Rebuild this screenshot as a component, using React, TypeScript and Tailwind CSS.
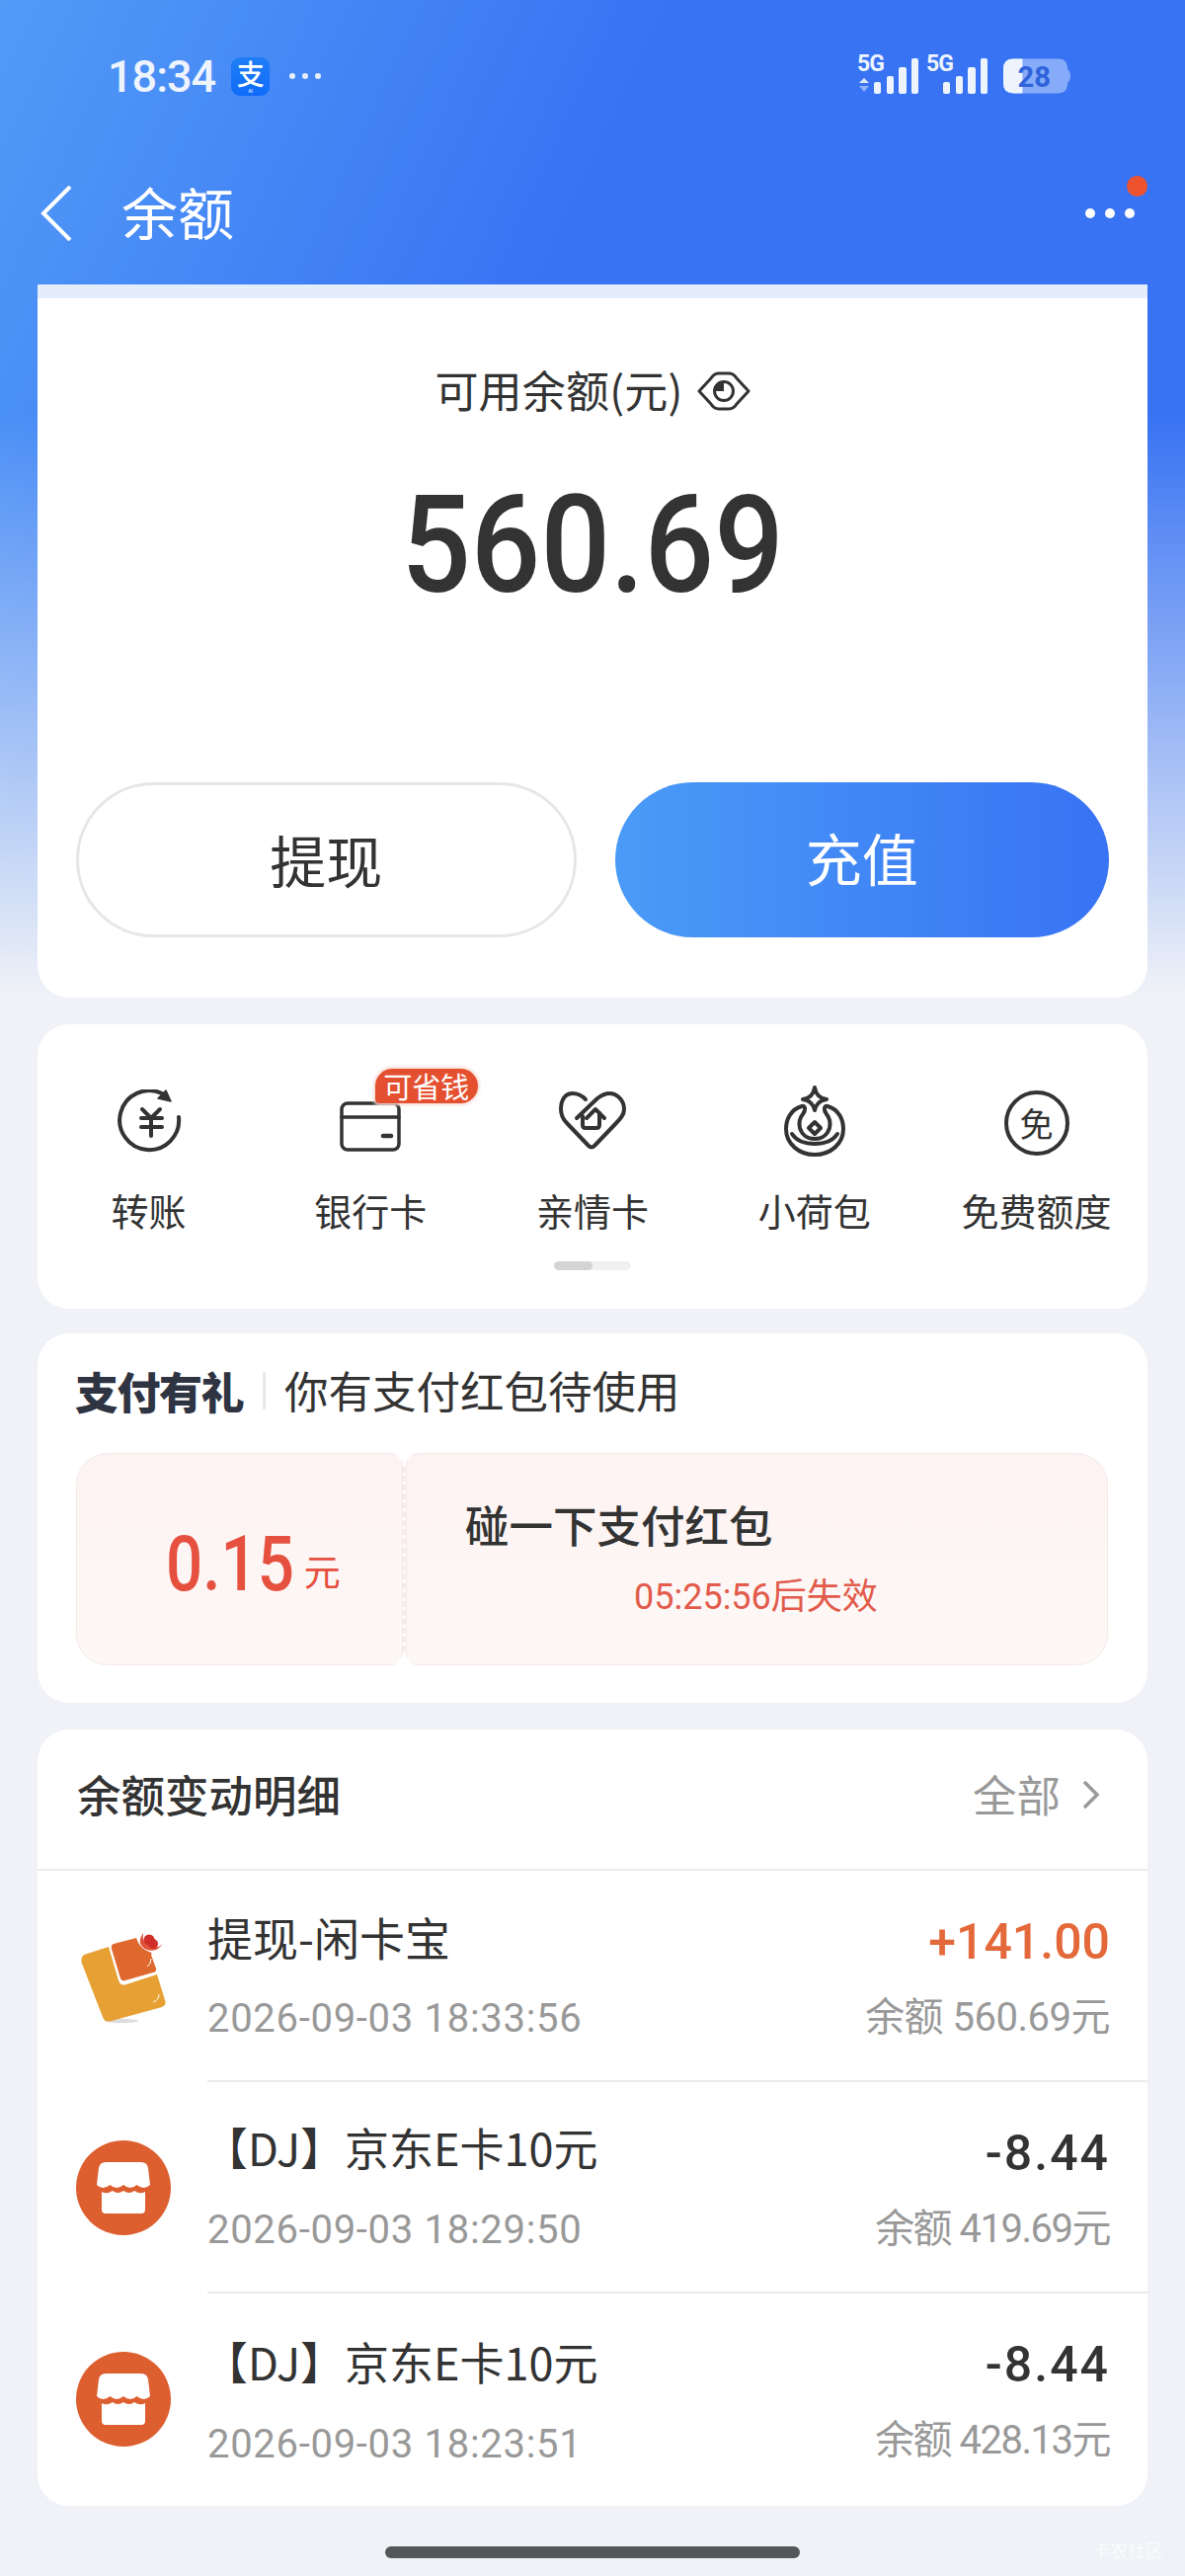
import React from "react";

const CJK = "font-['Noto_Sans_CJK_SC','Noto_Sans',sans-serif]";
const NUM = "font-['Roboto','Noto_Sans_CJK_SC',sans-serif]";

function Signal({ arrows }: { arrows?: boolean }) {
  return (
    <svg width="63" height="48" viewBox="0 -8 63 48" className="block">
      <text x="0" y="17" fontSize="23" fontWeight="700" fill="#eef4fe" fontFamily="Roboto, sans-serif" letterSpacing="-1">5G</text>
      {arrows && (
        <>
          <path d="M2 29 L7 24 L12 29 Z" fill="#dfe9fd" />
          <path d="M2 32 L12 32 L7 38 Z" fill="#8fb0f8" />
        </>
      )}
      <rect x="17" y="28" width="7" height="12" rx="2" fill="#eef4fe" />
      <rect x="30" y="22" width="7" height="18" rx="2" fill="#eef4fe" />
      <rect x="42" y="13" width="8" height="27" rx="2" fill="#eef4fe" />
      <rect x="55" y="4" width="7" height="36" rx="2" fill="#eef4fe" />
    </svg>
  );
}

function Battery() {
  return (
    <svg width="68" height="44" viewBox="0 -4 70 44" className="block">
      <path d="M11 0 H57 Q67 0 67 10 V26 Q67 36 57 36 H11 Q0 36 0 26 V10 Q0 0 11 0 Z" fill="#86abf9" />
      <path d="M67 11 Q70 13 70 18 Q70 23 67 25 Z" fill="#86abf9" />
      <path d="M11 0 H20 V36 H11 Q0 36 0 26 V10 Q0 0 11 0 Z" fill="#eef4fe" />
      <text x="15" y="29" fontSize="30" fontWeight="700" fill="#2f63dc" fontFamily="Roboto, sans-serif">28</text>
    </svg>
  );
}

function AlipayIcon() {
  return (
    <div className={`flex h-[39px] w-[39px] flex-col items-center rounded-[9px] bg-[linear-gradient(180deg,#1f7ff5,#0f6bfa)] text-white ${CJK}`}>
      <span className="mt-[1px] text-[28px] leading-[30px] font-medium">支</span>
      <span className="text-[5px] leading-[6px]">AI</span>
    </div>
  );
}

function EyeIcon() {
  return (
    <svg width="54" height="40" viewBox="0 0 54 40" fill="none" stroke="#333" strokeWidth="3" className="block">
      <path d="M2 20 L14 7 Q17 2 22 2 H32 Q37 2 40 7 L52 20 L40 33 Q37 38 32 38 H22 Q17 38 14 33 Z" strokeLinejoin="round" />
      <circle cx="27" cy="20" r="9.5" />
      <path d="M27 20 V10.5 A9.5 9.5 0 0 0 17.5 20 Z" fill="#333" stroke="none" />
    </svg>
  );
}

function TransferIcon() {
  return (
    <svg width="68" height="68" viewBox="-2 0 68 68" fill="none" stroke="#333" strokeWidth="4" strokeLinecap="round" strokeLinejoin="round">
      <path d="M63 28 A30 30 0 1 1 46 4" />
      <path d="M50 1 L55 12 L42 9 Z" fill="#333" strokeWidth="1.5" />
      <path d="M26 20 L35 29 L44 20 M25 29 H46 M25 38 H46 M35 29 V47" />
    </svg>
  );
}

function CardIcon() {
  return (
    <svg width="68" height="68" viewBox="0 0 68 68" fill="none" stroke="#333" strokeWidth="3.5" strokeLinecap="round" strokeLinejoin="round">
      <rect x="5" y="14" width="58" height="47" rx="6" />
      <path d="M5 28 H63" />
      <path d="M47 47 H55" strokeWidth="4.5" />
    </svg>
  );
}

function HeartHomeIcon() {
  return (
    <svg width="68" height="68" viewBox="0 0 68 68" fill="none" stroke="#333" strokeWidth="4" strokeLinecap="round" strokeLinejoin="round">
      <path d="M27 10 C22 5 18 4 14 4 C6 4 2 11 2 20 C2 26 4 30 8 34 L30 57 Q33 60 36 57 L58 34 C62 30 66 26 66 20 C66 11 59 4 51 4 C46 4 43 6 39 9 L18 29" />
      <path d="M24 27 V36 Q24 39 27 39 H38 Q41 39 41 36 V24" />
      <path d="M28 29 L37 20 L46 29" />
    </svg>
  );
}

function PouchIcon() {
  return (
    <svg width="68" height="76" viewBox="0 -4 68 76" fill="none" stroke="#333" strokeWidth="4" strokeLinecap="round" strokeLinejoin="round">
      <path d="M34 -2 C35 4 39 9 46 10 C39 11 35 16 34 21 C33 16 29 11 22 10 C29 9 33 4 34 -2 Z" />
      <path d="M21 17 C10 20 5 30 5 40 C5 55 18 66 34 66 C50 66 63 55 63 40 C63 30 58 20 47 17 C43 16 43 21 46 25 C50 30 50 35 49 39 C47 46 41 50 34 50 C27 50 21 46 19 39 C18 35 18 30 22 25 C25 21 25 16 21 17 Z" />
      <path d="M11 45 C15 51 22 55 34 55 C46 55 53 51 57 45" />
      <path d="M34 33 L40 39 L34 45 L28 39 Z" />
    </svg>
  );
}

function FreeIcon() {
  return (
    <div className={`flex h-[66px] w-[66px] items-center justify-center rounded-full border-[4px] border-[#333] text-[34px] leading-none text-[#333] ${CJK}`}>
      免
    </div>
  );
}

function StoreIcon() {
  return (
    <svg width="96" height="96" viewBox="0 0 96 96" className="block">
      <circle cx="48" cy="48" r="48" fill="#dd5f30" />
      <path d="M30 22 H66 Q72 22 73 28 L75 45 Q69 51 61.5 45 Q55 51 48 45 Q41 51 34.5 45 Q27 51 21 45 L23 28 Q24 22 30 22 Z" fill="#fff" />
      <path d="M26 52 Q31 55 37 51 Q42 55 48 51 Q54 55 59 51 Q65 55 70 52 V70 Q70 74 66 74 H30 Q26 74 26 70 Z" fill="#fff" />
    </svg>
  );
}

function WalletIcon() {
  return (
    <svg width="100" height="100" viewBox="0 -4 100 100" className="block">
      <ellipse cx="46" cy="91" rx="17" ry="2" fill="#dcdcdc" />
      <path d="M8 24 L33 16 L43 50 Q45 56 51 54 L82 44 L90 70 Q92 75 87 77 L36 91 Q29 93 27 87 L6 33 Q4 27 8 24 Z" fill="#e7a034" />
      <path d="M38 13 L61 7 Q64 17 74 21 Q78 22 76 24 L81 38 Q82 41 78 42 L50 50 Q46 51 45 48 L36 18 Q35 14 38 13 Z" fill="#df682f" />
      <path d="M68 2 Q66 12 76 16 Q84 18 88 12 Q83 22 72 19 Q60 14 68 2 Z" fill="#e0533a" />
      <circle cx="74" cy="9" r="5.5" fill="#cf2f28" />
      <circle cx="78" cy="13" r="5" fill="#cf2f28" />
      <path d="M72 36 Q76 34 76 28 M78 72 Q84 70 84 64" stroke="#fff" strokeWidth="1" fill="none" />
    </svg>
  );
}

function Tool({ icon, label, badge }: { icon: React.ReactNode; label: string; badge?: boolean }) {
  return (
    <div className="relative flex flex-col items-center">
      <div className="flex h-[68px] items-center justify-center">{icon}</div>
      <div className="mt-[29px] text-[38px] leading-[50px] whitespace-nowrap text-[#333]">{label}</div>
      {badge && (
        <div className="absolute top-[-21px] left-[117px] flex h-[35px] w-[104px] items-center justify-center rounded-[18px] rounded-bl-[4px] bg-[#e4502f] text-[29px] leading-none whitespace-nowrap text-white shadow-[0_0_3px_2px_#f7ddd6]">
          可省钱
        </div>
      )}
    </div>
  );
}

function Row({
  icon,
  title,
  time,
  amount,
  balance,
  positive,
  last,
  titleClass,
  amountClass,
  balanceClass,
}: {
  icon: React.ReactNode;
  title: string;
  time: string;
  amount: string;
  balance: string;
  positive?: boolean;
  last?: boolean;
  titleClass: string;
  amountClass?: string;
  balanceClass: string;
}) {
  return (
    <div className="flex h-[214px]">
      <div className="flex w-[172px] items-center pl-[39px]">{icon}</div>
      <div className={`flex flex-1 justify-between pr-[38px] ${last ? "" : "border-b-2 border-[#ebebeb]"}`}>
        <div className="pt-[36px]">
          <div className={`leading-[60px] whitespace-nowrap text-[#333] ${titleClass}`}>{title}</div>
          <div className={`mt-[29px] text-[40px] leading-[50px] tracking-[0.7px] text-[#999] ${NUM}`}>{time}</div>
        </div>
        <div className="flex flex-col items-end pt-[42px]">
          <div className={`text-[50px] leading-[60px] font-medium ${NUM} ${positive ? "text-[#e4693a]" : "text-[#333]"} ${amountClass ?? ""}`}>{amount}</div>
          <div className={`mt-[22px] text-[40px] leading-[50px] whitespace-nowrap text-[#999] ${NUM} ${balanceClass}`}>{balance}</div>
        </div>
      </div>
    </div>
  );
}

export default function App() {
  return (
    <div
      className={`relative h-[2608px] w-[1200px] overflow-hidden bg-[linear-gradient(180deg,rgba(240,242,247,0)_420px,#f0f2f7_1010px),linear-gradient(115deg,#529bf7_0px,#3873f3_620px)] ${CJK}`}
    >
      {/* status bar */}
      <div className="flex h-[154px] items-center justify-between pr-[116px] pl-[109px]">
        <div className="flex items-center">
          <span className={`text-[45px] leading-none font-medium tracking-[-1px] text-[#eef4fe] ${NUM}`}>18:34</span>
          <div className="ml-[16px]">
            <AlipayIcon />
          </div>
          <div className="ml-[20px] flex gap-[7px]">
            <span className="h-[6px] w-[6px] rounded-full bg-[#e6eefd]" />
            <span className="h-[6px] w-[6px] rounded-full bg-[#e6eefd]" />
            <span className="h-[6px] w-[6px] rounded-full bg-[#e6eefd]" />
          </div>
        </div>
        <div className="flex h-[60px] items-start">
          <Signal arrows />
          <div className="ml-[7px]">
            <Signal />
          </div>
          <div className="mt-[8px] ml-[15px]">
            <Battery />
          </div>
        </div>
      </div>

      {/* nav */}
      <div className="relative flex h-[134px] items-start pr-[51px] pl-[41px]">
        <svg width="32" height="56" viewBox="0 0 32 56" fill="none" stroke="#fff" strokeWidth="4" className="mt-[34px] block">
          <path d="M30 1 L3 28 L30 55" />
        </svg>
        <div className="mt-[29px] ml-[50px] text-[57px] leading-[60px] text-white">余额</div>
        <div className="mt-[57px] ml-auto flex gap-[10px]">
          <span className="h-[10px] w-[10px] rounded-full bg-white" />
          <span className="h-[10px] w-[10px] rounded-full bg-white" />
          <span className="h-[10px] w-[10px] rounded-full bg-white" />
        </div>
        <span className="absolute top-[24px] right-[38px] h-[21px] w-[21px] rounded-full bg-[#ee5330]" />
      </div>

      <div className="mx-[38px] flex flex-col">
        {/* balance card */}
        <div className="h-[722px] overflow-hidden rounded-b-[32px] bg-white">
          <div className="h-[14px] bg-[#e3edfb]" />
          <div className="mt-[62px] flex items-center justify-center">
            <span className="text-[44px] leading-[60px] tracking-[0.2px] text-[#333]">可用余额(元)</span>
            <div className="mt-[3px] ml-[14px]">
              <EyeIcon />
            </div>
          </div>
          <div className={`mt-[58px] scale-x-[0.9] text-center text-[138px] leading-[140px] font-medium text-[#333] ${NUM}`}>560.69</div>
          <div className="mt-[170px] flex gap-[39px] px-[39px]">
            <div className="flex h-[157px] flex-1 items-center justify-center rounded-full border-[3px] border-[#e6e6e6] pb-[2px] text-[57px] text-[#333]">提现</div>
            <div className="flex h-[157px] flex-1 items-center justify-center rounded-full bg-[linear-gradient(90deg,#4a9bf7,#3873f3)] pb-[6px] text-[57px] text-white">充值</div>
          </div>
        </div>

        {/* tools card */}
        <div className="mt-[27px] h-[288px] rounded-[32px] bg-white pt-[66px]">
          <div className="grid grid-cols-5">
            <Tool icon={<TransferIcon />} label="转账" />
            <Tool icon={<CardIcon />} label="银行卡" badge />
            <Tool icon={<HeartHomeIcon />} label="亲情卡" />
            <Tool icon={<PouchIcon />} label="小荷包" />
            <Tool icon={<FreeIcon />} label="免费额度" />
          </div>
          <div className="mx-auto mt-[27px] h-[9px] w-[78px] overflow-hidden rounded-full bg-[#f0f0f0]">
            <div className="h-full w-[39px] rounded-full bg-[#d4d4d4]" />
          </div>
        </div>

        {/* gift card */}
        <div className="mt-[25px] h-[374px] rounded-[32px] bg-white px-[39px]">
          <div className="flex h-[121px] items-center pb-[6px]">
            <span className="-ml-[1px] text-[44px] leading-none font-black tracking-[-1.5px] text-[#2f3442]">支付有礼</span>
            <span className="ml-[20px] h-[38px] w-[3px] bg-[#e8e8e8]" />
            <span className="ml-[19px] text-[44.5px] leading-none text-[#333]">你有支付红包待使用</span>
          </div>
          <div className="relative flex h-[215px] w-[1045px] gap-[3px]">
            <div className="flex w-[331px] items-center rounded-[32px] rounded-r-[12px] border border-[#f6e9e8] bg-[linear-gradient(180deg,#fdf3f2,#fdf8f7)] pt-[10px] pl-[90px]">
              <span className={`inline-block origin-left scale-x-[0.84] text-[78px] leading-none font-medium text-[#e5503f] ${NUM}`}>0.15</span>
              <span className="mt-[14px] -ml-[15px] text-[37px] leading-none text-[#e5503f]">元</span>
            </div>
            <div className="flex-1 rounded-[32px] rounded-l-[12px] border border-[#f6e9e8] bg-[linear-gradient(180deg,#fdf3f2,#fdf8f7)] pt-[41px] pl-[59px]">
              <div className="text-[44.5px] leading-[60px] font-medium text-[#333]">碰一下支付红包</div>
              <div className={`mt-[19px] ml-[171px] text-[36px] leading-[50px] text-[#e25b4b] ${NUM}`}>05:25:56后失效</div>
            </div>
            <span className="absolute top-[-8px] left-[324px] h-[16px] w-[16px] rounded-full bg-white" />
            <span className="absolute bottom-[-8px] left-[324px] h-[16px] w-[16px] rounded-full bg-white" />
            <span className="absolute top-[14px] bottom-[14px] left-[331px] border-l-[3px] border-dashed border-[#f6ecea]" />
          </div>
        </div>

        {/* detail card */}
        <div className="mt-[27px] h-[786px] rounded-[32px] bg-white">
          <div className="flex h-[143px] items-center justify-between border-b-2 border-[#ebebeb] pr-[49px] pb-[10px] pl-[40px]">
            <span className="text-[44.5px] leading-none font-medium text-[#333]">余额变动明细</span>
            <div className="flex items-center">
              <span className="text-[44.5px] leading-none text-[#999]">全部</span>
              <svg width="17" height="30" viewBox="0 0 17 30" fill="none" stroke="#999" strokeWidth="3.5" className="ml-[22px]">
                <path d="M2 2 L15 15 L2 28" />
              </svg>
            </div>
          </div>
          <Row icon={<WalletIcon />} title="提现-闲卡宝" time="2026-09-03 18:33:56" amount="+141.00" balance="余额 560.69元" positive titleClass="text-[46px]" balanceClass="tracking-[-0.5px]" />
          <Row icon={<StoreIcon />} title="【DJ】京东E卡10元" time="2026-09-03 18:29:50" amount="-8.44" balance="余额 419.69元" titleClass="-ml-[4px] text-[45px]" amountClass="tracking-[2px]" balanceClass="tracking-[-1.5px]" />
          <Row icon={<StoreIcon />} title="【DJ】京东E卡10元" time="2026-09-03 18:23:51" amount="-8.44" balance="余额 428.13元" last titleClass="-ml-[4px] mt-[3px] text-[45px]" amountClass="tracking-[2px]" balanceClass="tracking-[-1.5px]" />
        </div>
      </div>

      {/* home indicator */}
      <div className="mx-auto mt-[41px] h-[12px] w-[420px] rounded-full bg-[#555659]" />
      <div className="absolute right-[22px] bottom-[18px] text-[18px] leading-none text-white opacity-70">卡农社区</div>
    </div>
  );
}
